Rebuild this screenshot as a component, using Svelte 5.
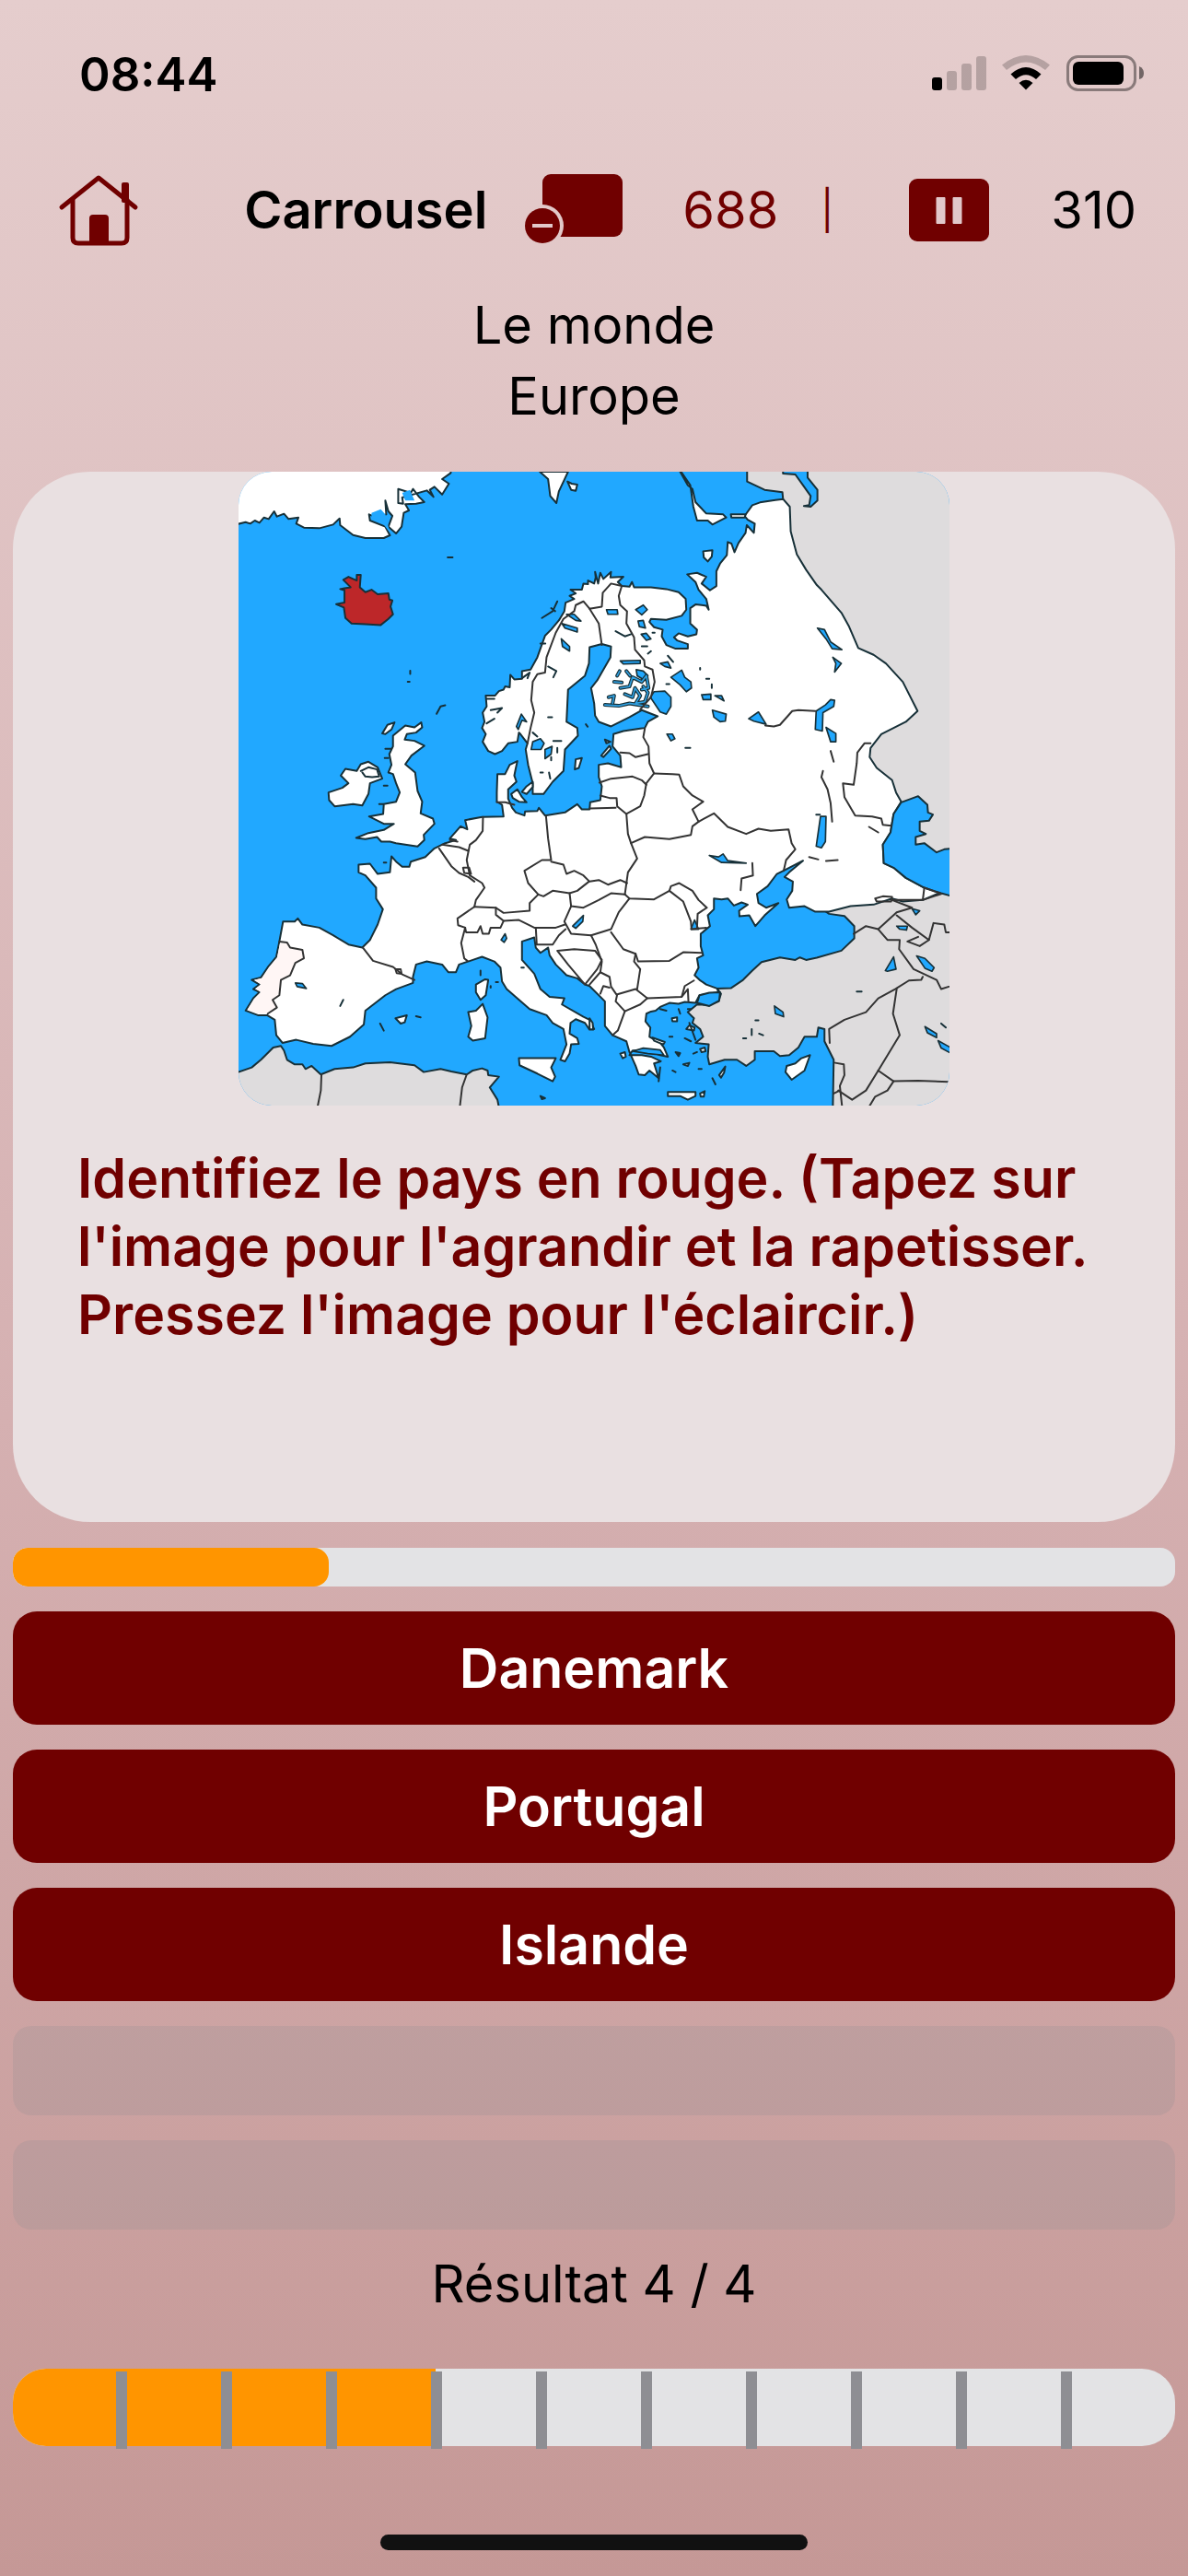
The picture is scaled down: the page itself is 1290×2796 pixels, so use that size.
<script>
	const answers = ['Danemark', 'Portugal', 'Islande'];
	const emptySlots = [0, 1];
	const ticks = Array.from({ length: 10 }, (_, i) => i);

	let timeLeft = 27.2;
	let result = 4;
	let played = 4;
	let total = 11;

	// inland borders, drawn as open lines over the land
	const borders = [
		// norway, sweden, finland
		'M968 920L978 870L990 820L980 780L985 720L1000 695L1025 690L1030 640L1060 560L1085 515L1120 490L1125 470L1150 458L1170 482L1210 475L1213 430L1240 400L1275 408',
		'M1170 482L1200 530L1210 600',
		'M1275 408L1265 440L1270 470L1292 490L1290 530L1315 575L1318 615L1348 650L1350 670L1375 680L1382 720L1370 770L1335 810',
		// baltics and belarus
		'M1350 872L1345 900L1362 930L1365 985L1380 1018L1355 1050L1348 1090L1335 1125L1290 1150',
		'M1270 950L1300 952L1320 965L1360 955', 'M1202 1048L1240 1035L1310 1028L1340 1040L1355 1055',
		'M1380 1018L1440 1020L1462 1022L1475 1060L1505 1090L1540 1110L1505 1135L1525 1175L1505 1190L1500 1218L1430 1232L1350 1225L1305 1245',
		'M1205 1090L1235 1098L1258 1098L1260 1125L1290 1150L1295 1215L1305 1245L1325 1295L1295 1340L1285 1412',
		'M1170 1132L1255 1130',
		// ukraine and moldova
		'M1525 1175L1575 1148L1620 1192L1680 1215L1720 1198L1760 1205L1818 1200L1828 1245L1840 1265L1810 1300L1802 1335',
		'M1285 1412L1300 1425L1380 1428L1430 1400L1475 1435L1500 1500L1502 1525L1550 1520',
		'M1430 1400L1435 1385L1462 1375L1505 1400L1525 1430L1552 1455L1522 1475L1520 1520',
		// benelux, germany
		'M823 1160L822 1205L800 1235L780 1250L770 1300L775 1325L780 1350L820 1375L828 1390L800 1430L795 1452',
		'M680 1262L720 1320L745 1342L775 1355L795 1370', 'M690 1250L745 1258L775 1270', 'M715 1235L740 1240',
		'M758 1325L778 1325L784 1345L762 1342Z', 'M868 1112L895 1112L925 1120',
		'M1028 1155L1035 1230L1045 1300L1015 1300L958 1335L970 1375L1003 1412L975 1440L975 1465L890 1472L865 1455L795 1452',
		// central europe
		'M1045 1305L1085 1315L1095 1345L1120 1335L1150 1350L1170 1370L1200 1365L1230 1380L1270 1365L1292 1375',
		'M1003 1412L1020 1418L1050 1400L1105 1408L1130 1400L1168 1370', 'M1105 1408L1110 1450L1150 1455L1200 1430L1240 1408L1285 1412',
		'M1110 1450L1088 1500L1110 1540L1175 1545L1240 1525L1265 1470L1300 1425',
		// alps
		'M795 1452L740 1490L742 1512L765 1520L768 1535L805 1535L815 1515L822 1540L842 1540L848 1520L880 1520L890 1498L865 1478L865 1455',
		'M890 1498L940 1495L990 1520L1060 1520L1090 1510', 'M765 1520L752 1570L762 1620L772 1628',
		'M995 1520L998 1575L1050 1575L1070 1545L1092 1525',
		// balkans
		'M1065 1595L1100 1640L1155 1705L1195 1655L1210 1625L1188 1595L1120 1590Z', 'M1175 1545L1190 1575L1210 1630L1205 1665L1170 1705',
		'M1240 1535L1280 1590L1320 1605L1328 1630L1430 1628L1475 1600L1535 1602',
		'M1205 1665L1235 1680L1240 1712L1258 1738L1320 1720L1358 1750L1335 1770L1285 1792L1255 1760L1260 1738',
		'M1320 1605L1315 1630L1335 1655L1325 1720', 'M1358 1750L1470 1745L1480 1710L1510 1692', 'M1285 1792L1262 1855L1245 1870',
		'M1205 1735L1215 1710L1235 1715', 'M1470 1745L1490 1720L1492 1760',
		// iberia
		'M160 1565L185 1568L195 1585L235 1592L240 1620L212 1635L195 1675L165 1690L160 1740L138 1755L152 1780L122 1800',
		'M432 1585L465 1628L530 1648L560 1672L600 1690', 'M538 1655L555 1655L558 1670L542 1668Z',
		// russia
		'M1742 862L1770 865L1790 860L1830 815L1850 812L1905 815',
		'M2085 920L2065 920L2042 950L2040 985L2030 1055L1995 1050L2000 1095L2035 1155L2090 1158L2120 1165L2125 1185L2152 1188',
		'M1930 1010L1925 1030L1945 1070L1955 1115L1960 1175', 'M1955 945L1965 980',
		'M1885 1290L1915 1298', 'M1940 1303L1978 1300', 'M2080 1192L2110 1210', 'M1700 1310L1702 1350L1665 1360L1662 1398',
		// caucasus and near east
		'M2100 1425L2125 1418L2155 1420L2152 1435L2105 1435Z', 'M2255 1430L2260 1390L2315 1410L2255 1430L2155 1430L2220 1455L2170 1470L2110 1525',
		'M2030 1540L2070 1515L2110 1525L2140 1560L2180 1560L2178 1590L2225 1655L2300 1690L2315 1720L2340 1712',
		'M2170 1480L2220 1520L2275 1560L2245 1580L2205 1565L2240 1550', 'M2275 1560L2290 1505L2325 1510L2330 1535L2345 1535',
		'M1952 1895L1950 1850L2000 1820L2070 1795L2110 1750L2165 1720L2210 1692L2250 1690L2255 1680',
		'M2170 1720L2158 1800L2180 1870L2110 1985L2070 2050L2025 2080L1980 2050',
		'M2110 1985L2160 2020L2240 2018L2340 2022', 'M2160 2020L2140 2050L2100 2070L2082 2100', 'M1970 1960L1998 1965L2000 2000L1985 2035L1992 2100', 'M1965 2060L1985 2050',
		// north africa
		'M297 1998L295 2050L285 2100', 'M770 1998L755 2040L748 2100'
	];

	const lakes = [
		'M1095 500L1120 500L1142 522L1125 520Z', 'M1080 530L1130 545L1130 558L1090 545Z', 'M1078 580L1105 605L1105 620L1082 605Z',
		'M980 940L985 915L1010 905L1022 920L1012 940Z', 'M1025 970L1025 940L1048 930L1045 955Z', 'M932 865L948 825L965 850L950 845L938 875Z',
		'M1225 485L1260 485L1262 500L1230 500Z', 'M1320 485L1345 470L1358 485L1340 502Z', 'M1328 522L1345 520L1352 545L1332 540Z', 'M1338 565L1355 562L1370 580L1355 585Z',
		'M1270 652L1335 650L1335 660L1280 662Z', 'M1322 680L1345 685L1360 700L1350 715L1325 700Z',
		'M1368 770L1380 752L1415 750L1435 770L1435 800L1420 825L1400 818Z',
		'M1400 660L1425 655L1435 675L1415 670Z', 'M1435 705L1470 682L1480 705L1500 720L1502 740L1485 752L1465 730Z',
		'M1535 762L1565 760L1565 778L1540 778Z', 'M1578 765L1600 765L1608 782Z', 'M1570 812L1615 825L1612 848L1595 850L1575 835Z',
		'M1688 840L1720 818L1745 858L1705 848Z', 'M1422 890L1440 890L1448 905L1435 912Z',
		'M1912 545L1935 550L1955 590L1992 615L1960 612L1940 580Z', 'M1962 640L1990 660L1968 688L1972 660Z',
		'M1938 795L1955 778L1968 780L1965 800L1930 820L1928 880L1905 875L1908 815Z', 'M1940 868L1972 888L1972 915L1955 915Z',
		'M1922 1158L1940 1158L1938 1240L1925 1260L1908 1255Z', 'M1560 1285L1590 1290L1605 1280L1620 1302L1680 1310L1600 1308Z',
		'M1500 1525L1512 1495L1525 1525Z', 'M1115 1515L1150 1480L1148 1500L1125 1522Z', 'M882 1560L895 1540L900 1555L892 1568Z',
		'M212 1700L235 1702L248 1718L218 1712Z',
		'M2220 1458L2245 1465L2232 1478Z', 'M2170 1515L2205 1515L2202 1528L2180 1525Z', 'M2235 1612L2262 1620L2292 1650L2285 1662L2262 1652Z',
		'M2133 1660L2160 1615L2168 1655L2140 1662Z', 'M1772 1775L1800 1795L1802 1810L1775 1800Z',
		'M2262 1842L2300 1865L2300 1878L2270 1862Z', 'M2305 1888L2345 1910V1928L2315 1912Z', 'M1310 1922L1345 1912L1400 1918L1412 1935L1360 1930Z'
	];

	// the finnish lake district
	const lakeland = 'M1220 795L1265 798L1300 790L1360 800M1232 770L1250 765L1245 790M1270 740L1300 735L1310 705L1340 720L1355 700L1362 740L1340 745M1285 760L1310 770L1318 740L1335 765L1320 790L1350 785L1360 755L1345 735M1250 720L1275 722M1260 700L1268 685M1290 685L1302 700';

	const islands = [
		// great britain and ireland
		'M530 895L570 862L600 868L622 852L625 868L605 885L575 890L568 908L600 912L632 928L590 960L570 988L602 1015L610 1075L625 1110L620 1148L660 1165L665 1182L630 1218L632 1235L610 1256L540 1245L520 1240L492 1240L478 1225L440 1232L410 1228L450 1212L500 1202L533 1182L500 1182L452 1158L498 1150L500 1118L540 1110L552 1080L540 1050L530 1020L515 1015L525 990L518 955L530 930Z',
		'M320 1080L365 1065L385 1050L360 1025L375 1003L412 1010L425 988L450 980L480 998L495 1035L455 1050L450 1085L430 1122L400 1118L340 1125L322 1105Z',
		'M495 888L512 860L535 852L525 875L505 890Z',
		// denmark, gotland, estonian islands
		'M915 1085L935 1070L950 1095L965 1112L940 1110L920 1098Z', 'M950 1078L965 1060L985 1045L985 1062L965 1085Z', 'M1122 1005L1125 972L1145 968L1135 1000Z', 'M1208 960L1235 928L1240 938L1215 965Z', 'M1220 908L1238 915L1225 920Z',
		// mediterranean
		'M800 1705L830 1688L840 1690L832 1740L815 1755L800 1730Z', 'M775 1795L800 1790L822 1768L838 1812L830 1880L790 1888L775 1875L785 1840Z',
		'M538 1815L575 1805L568 1828L555 1832Z', 'M940 1945L1060 1945L1045 1975L1058 2005L1050 2020L1000 1995L942 1968Z',
		'M1425 2055L1515 2055L1515 2068L1490 2080L1465 2068L1425 2068Z', 'M1530 2060L1545 2052L1542 2070L1532 2070Z',
		'M1808 1990L1812 1970L1840 1962L1860 1945L1888 1935L1870 1985L1828 2015Z', 'M1592 2000L1612 1972L1608 1992L1598 2008Z',
		'M1438 1815L1455 1812L1455 1825L1440 1825Z', 'M1485 1850L1495 1838L1512 1845L1510 1855Z', 'M1530 1915L1545 1910L1548 1922L1535 1925Z',
		'M1270 1930L1285 1925L1288 1940L1278 1945Z', 'M1375 1878L1415 1892L1410 1900L1380 1888Z', 'M1450 1925L1465 1928L1460 1938Z', 'M1475 1965L1495 1960L1490 1970Z', 'M1170 1815L1180 1830L1182 1852L1170 1850Z',
		// barents sea
		'M1465 36L1490 80L1505 92L1515 135L1550 172L1605 175L1615 185L1570 208L1555 195L1520 195L1508 150L1498 80L1468 36Z', 'M1630 175L1678 175L1675 185L1632 185Z', 'M1540 295L1570 292L1568 312L1555 328L1542 315Z',
		'M1008 36L1035 60L1042 115L1062 138L1070 100L1088 62L1100 36Z', 'M1098 68L1112 75L1130 78L1125 98L1110 95Z'
	];

	const specks = [
		'M708 315H724', 'M586 684V694', 'M578 720H584', 'M672 824L685 800L700 796', 'M1015 512L1050 490L1065 458M1045 480L1058 490', 'M1010 595H1026',
		'M950 708L975 690L968 708', 'M848 812L885 805L870 820M835 855L860 840M835 775H860', 'M1035 670L1062 685L1052 705', 'M1035 835H1048M1052 912H1078M985 885L1000 898M1065 935V950M1045 965V975M1010 1015H1018M1038 1015L1042 1035',
		'M1158 858L1164 866', 'M505 938H525M503 968H515M500 1058H512M500 1308H508M485 1118H498', 'M488 1832L500 1855M605 1808L620 1812M358 1775L368 1755', 'M815 1660V1675M865 1697H872M848 1710V1715M948 1650H956M1010 2068L1025 2075L1015 2078Z',
		'M1255 555L1285 572L1305 565M1375 560H1382M1340 604H1358M1360 628L1370 620M1425 635L1442 655M1420 727H1430M1530 675V680M1550 710H1560M1568 728V740M1482 935H1498M1908 1152H1920',
		'M2040 1728H2056M1710 1822H1720M1698 1850V1870M1722 1865L1735 1870M1670 1880H1680M2315 1832L2330 1845',
		'M1495 1830L1515 1885M1430 1875H1440M1440 1985L1450 1990M1525 1980H1535M1508 1930L1520 1925M1480 1880L1500 1890M1570 2010L1580 2030M1400 1975L1395 2020M1420 1790L1400 1785M1460 1785L1465 1800M1490 1785H1500'
	];
</script>

<div class="page">
	<header class="status">
		<time>08:44</time>
		<svg class="indicators" viewBox="0 0 232 40" aria-hidden="true">
			<rect x="1" y="24" width="11" height="14" rx="3" />
			<g opacity="0.2">
				<rect x="17" y="17" width="11" height="21" rx="3" />
				<rect x="33" y="9" width="11" height="29" rx="3" />
				<rect x="49" y="1" width="11" height="37" rx="3" />
				<path d="M77 10.500Q103 -10.500 129 10.500L124 16Q103 -1 82 16Z" />
			</g>
			<path d="M86.500 20.500Q103 5.500 119.500 20.500L114 26Q103 16.500 92 26Z" />
			<path d="M95.500 30Q103 23.500 110.500 30L103 37.500Z" />
			<rect x="148.500" y="1.500" width="73" height="36" rx="11" fill="none" stroke="#000" stroke-width="3" opacity="0.4" />
			<rect x="154" y="7" width="55" height="25" rx="6" />
			<path d="M226 12Q231 14 231 19.500T226 26Z" opacity="0.5" />
		</svg>
	</header>

	<nav class="toolbar">
		<button class="tool" aria-label="Accueil">
			<svg width="88" height="78" viewBox="0 0 88 78" fill="none" stroke="currentColor" stroke-width="5" stroke-linecap="round" stroke-linejoin="round">
				<path d="M4 36L44 4L84 36" />
				<path d="M16 28V69Q16 75 22 75H69Q75 75 75 69V28" />
				<rect x="69" y="9" width="8" height="22" rx="2" fill="currentColor" stroke="none" />
				<path d="M34 75V48Q34 44 38 44H51Q55 44 55 48V75Z" fill="currentColor" stroke="none" />
			</svg>
		</button>
		<h1>Carrousel</h1>
		<button class="tool card-tool" aria-label="Retirer la carte">
			<svg width="108" height="78" viewBox="0 0 108 78">
				<mask id="cut">
					<rect width="108" height="78" fill="#fff" />
					<circle cx="20" cy="56" r="23" fill="#000" />
				</mask>
				<rect x="20" y="0" width="87" height="68" rx="9" fill="currentColor" mask="url(#cut)" />
				<circle cx="20" cy="56" r="19" fill="currentColor" />
				<path d="M9 56H31" stroke="#e2c8ca" stroke-width="4" />
			</svg>
		</button>
		<span class="cards">688</span>
		<span class="bar">|</span>
		<button class="tool pause-tool" aria-label="Pause">
			<svg width="88" height="68" viewBox="0 0 88 68">
				<rect width="87" height="68" rx="9" fill="currentColor" />
				<path d="M30 20.500h9v28h-9zM48 20.500h9v28h-9z" fill="#e2c8ca" stroke="#e2c8ca" stroke-linejoin="round" />
			</svg>
		</button>
		<span class="points">310</span>
	</nav>

	<div class="theme">
		<div>Le monde</div>
		<div>Europe</div>
	</div>

	<main>
		<section class="question">
			<button class="picture" aria-label="Carte de l'Europe">
				<svg viewBox="27 36 2316 2064" stroke="#173038" stroke-width="6" stroke-linejoin="round" stroke-linecap="round">
					<rect x="27" y="36" width="2316" height="2064" fill="#21a8ff" stroke="none" />
					<!-- outside europe -->
					<path fill="#dedcdd" d="M1683 20L1683 68L1740 95L1798 103L1800 125L1900 600L2000 1200L1900 1440L1950 1475L2000 1482L2032 1515L2032 1555L1990 1595L1910 1618L1875 1625L1855 1617L1840 1625L1790 1617L1730 1632L1700 1660L1670 1690L1630 1717L1585 1718L1598 1735L1590 1760L1560 1772L1520 1770L1490 1795L1510 1815L1505 1830L1530 1850L1540 1875L1515 1895L1558 1900L1555 1940L1560 1965L1610 1950L1650 1950L1680 1970L1708 1950L1708 1922L1770 1922L1790 1938L1820 1935L1850 1910L1870 1875L1910 1875L1915 1845L1935 1850L1935 1890L1965 1950L1962 2120H2360V20Z" />
					<path fill="#dedcdd" d="M10 1990L27 1990L70 1975L100 1950L140 1910L165 1905L175 1920L185 1950L210 1965L235 1965L245 1980L265 1970L295 1998L340 1980L400 1975L440 1962L520 1958L600 1968L630 1990L685 1980L720 1988L770 1998L790 1985L820 1978L838 1985L840 2000L875 2005L845 2040L870 2080L878 2120H10Z" />
					<!-- greenland -->
					<path fill="#fff" d="M10 20V210L50 200L65 205L80 195L95 202L110 185L125 190L143 165L152 182L175 173L190 190L222 185L215 205L240 218L290 220L335 208L356 188L358 210L400 242L440 252L500 252L520 243L505 215L455 195L452 175L475 185L508 175L505 130L515 165L528 180L515 215L540 237L558 215L565 170L582 162L570 142L605 140L632 135L615 118L595 92L588 105L547 92L547 138L563 140L560 120L640 97L662 118L650 95L665 85L690 110L712 75L690 60L718 40L718 20Z" />
					<path fill="#21a8ff" stroke="none" d="M560 105L585 95L600 130L570 130ZM460 170L490 158L505 175L520 235L490 195L460 185ZM1040 50H1060V68H1040Z" />
					<!-- mainland -->
					<path fill="#fff" d="M968 920L945 890L940 885L935 915L905 920L885 945L862 955L840 945L822 915L832 890L820 870L828 850L822 820L835 800L832 765L862 765L875 750L890 745L895 735L910 738L912 697L925 712L950 710L950 685L978 680L1000 640L1025 570L1045 550L1070 520L1088 490L1092 462L1120 450L1105 440L1125 432L1108 420L1145 420L1150 400L1165 402L1165 390L1185 400L1190 380L1188 362L1198 400L1205 365L1215 385L1240 362L1238 380L1280 378L1262 395L1275 408L1300 410L1308 395L1315 412L1370 412L1420 418L1460 428L1483 450L1485 485L1470 505L1420 518L1370 515L1365 525L1380 542L1408 550L1405 572L1420 600L1450 612L1490 612L1490 597L1455 585L1445 575L1460 562L1490 572L1518 565L1520 550L1498 530L1498 480L1515 468L1550 472L1558 485L1550 450L1525 420L1515 395L1488 370L1520 365L1550 378L1535 400L1562 422L1583 408L1583 360L1595 335L1617 308L1620 265L1632 270L1642 298L1655 268L1678 235L1682 210L1705 235L1708 205L1685 192L1675 180L1700 145L1725 136L1775 128L1800 125L1822 150L1825 230L1845 305L1875 355L1910 405L1925 420L1990 495L2015 540L2045 610L2095 632L2135 660L2190 720L2238 815L2200 850L2120 890L2085 935L2082 965L2105 1000L2155 1040L2168 1080L2185 1110L2160 1150L2150 1210L2125 1250L2128 1310L2160 1325L2200 1358L2260 1390L2315 1405L2255 1430L2190 1435L2155 1425L2095 1445L2020 1450L1950 1468L1905 1468L1870 1450L1820 1455L1812 1428L1830 1400L1832 1370L1805 1355L1820 1340L1865 1302L1810 1330L1780 1345L1750 1385L1715 1410L1720 1440L1745 1455L1785 1440L1740 1480L1710 1515L1690 1480L1658 1483L1657 1465L1685 1445L1665 1438L1640 1448L1620 1425L1600 1428L1575 1425L1575 1460L1555 1480L1562 1515L1532 1540L1532 1580L1540 1610L1520 1620L1525 1650L1512 1675L1528 1690L1550 1705L1585 1718L1590 1730L1528 1740L1515 1765L1480 1762L1460 1768L1430 1765L1400 1778L1385 1790L1370 1793L1355 1800L1352 1825L1368 1845L1365 1875L1400 1895L1412 1910L1425 1940L1400 1935L1360 1920L1310 1920L1300 1935L1340 1935L1370 1940L1402 1955L1380 1962L1395 2010L1365 1985L1350 2000L1330 1998L1320 1970L1300 1925L1290 1890L1245 1870L1220 1840L1220 1760L1170 1710L1155 1705L1130 1685L1095 1675L1060 1640L1040 1610L1035 1585L1010 1602L995 1585L990 1552L950 1565L950 1625L990 1670L1010 1720L1040 1745L1088 1750L1080 1770L1150 1810L1170 1820L1185 1850L1170 1852L1155 1830L1125 1818L1108 1830L1105 1865L1130 1880L1135 1898L1110 1900L1105 1930L1090 1955L1075 1950L1095 1900L1085 1850L1050 1830L1030 1805L975 1785L900 1720L885 1695L880 1650L860 1630L820 1615L790 1625L745 1640L735 1665L710 1665L690 1640L640 1630L605 1640L595 1680L595 1700L540 1720L505 1740L440 1790L435 1835L390 1875L330 1905L270 1898L215 1885L170 1895L150 1870L145 1820L120 1805L90 1805L50 1790L75 1750L95 1730L75 1720L95 1705L70 1690L100 1682L125 1645L150 1615L160 1565L172 1500L210 1500L220 1490L235 1510L290 1520L335 1545L385 1575L430 1585L455 1560L480 1510L497 1460L475 1425L475 1390L440 1350L418 1340L418 1315L455 1312L480 1345L520 1340L525 1288L540 1305L560 1322L583 1322L588 1305L635 1290L665 1262L700 1245L735 1235L715 1230L750 1190L772 1200L765 1170L820 1160L890 1158L885 1120L868 1110L868 1080L870 1020L895 1020L910 990L935 978L930 1000L925 1025L932 1045L905 1070L905 1100L918 1130L930 1145L958 1155L960 1142L1000 1140L1005 1130L1025 1155L1090 1145L1130 1118L1145 1135L1170 1135L1172 1112L1205 1105L1210 1060L1200 1030L1200 990L1230 985L1273 998L1270 960L1245 930L1248 890L1280 880L1335 872L1350 870L1360 850L1392 832L1340 812L1300 835L1270 850L1240 865L1200 850L1188 830L1185 790L1175 740L1195 715L1238 640L1240 605L1210 597L1170 607L1168 660L1155 700L1100 745L1095 850L1130 870L1132 895L1090 940L1085 1010L1050 1045L1020 1085L985 1085L985 1050L970 990L962 940Z" />
					<path fill="#fff6f5" stroke="none" d="M162 1570L185 1572L195 1588L232 1595L236 1618L210 1633L192 1673L163 1688L157 1740L136 1755L148 1778L120 1798L92 1800L56 1787L78 1752L100 1730L82 1718L100 1705L78 1690L103 1685L128 1648L153 1617Z" />
					<!-- caspian sea, kara bay -->
					<path fill="#21a8ff" d="M2185 1112L2240 1092L2270 1120L2272 1145L2288 1152L2275 1172L2245 1175L2245 1205L2265 1215L2232 1225L2232 1250L2260 1245L2300 1275L2325 1265L2360 1262V1420L2315 1408L2260 1390L2200 1358L2160 1325L2128 1310L2125 1250L2150 1210L2160 1150Z" />
					<path fill="#21a8ff" d="M1800 20V42L1840 45L1865 80L1890 115L1885 145L1868 148L1890 150L1912 130L1912 95L1880 55V20Z" />
					<path fill="#21a8ff" d="M1520 1765L1528 1740L1560 1732L1595 1730L1592 1758L1560 1775Z" />
					{#each islands as d}
						<path {d} fill="#fff" />
					{/each}
					<path fill="none" d="M425 1010L450 998L478 1005L485 1028L462 1030L440 1028L430 1015" />
					{#each lakes as d}
						<path {d} fill="#21a8ff" stroke-width="5" />
					{/each}
					<path d={lakeland} fill="none" stroke-width="12" />
					<path d={lakeland} fill="none" stroke="#2f9fe0" stroke-width="5" />
					{#each borders as d}
						<path {d} fill="none" stroke="#333" />
					{/each}
					{#each specks as d}
						<path {d} fill="none" stroke-width="6" />
					{/each}
					<!-- iceland -->
					<path fill="#bd2729" d="M372 422L358 418L372 415L392 412L368 388L385 378L400 385L412 390L412 372L425 372L422 412L440 428L460 420L480 435L515 432L518 452L528 455L522 475L530 500L515 515L490 535L440 532L395 530L375 512L370 478L345 467L372 462Z" />
				</svg>
			</button>
			<p>Identifiez le pays en rouge. (Tapez sur l'image pour l'agrandir et la rapetisser. Pressez l'image pour l'éclaircir.)</p>
		</section>

		<div class="timer" role="progressbar" aria-label="Temps" aria-valuenow={timeLeft}>
			<div class="fill" style="width: {timeLeft}%"></div>
		</div>

		<div class="answers">
			{#each answers as answer}
				<button class="answer">{answer}</button>
			{/each}
			{#each emptySlots as slot (slot)}
				<div class="slot"></div>
			{/each}
		</div>

		<div class="result">Résultat {result} / {played}</div>

		<div class="score" role="progressbar" aria-label="Résultat" aria-valuenow={result} aria-valuemax={total}>
			<div class="score-fill" style="width: {(result / total) * 100}%"></div>
			{#each ticks as tick (tick)}
				<span class="tick"></span>
			{/each}
		</div>
	</main>

	<div class="home-indicator"></div>
</div>

<style>
	:global(body) {
		margin: 0;
	}

	.page {
		--red: #700000;
		box-sizing: border-box;
		min-height: 100vh;
		display: flex;
		flex-direction: column;
		background: linear-gradient(#e5cdcd, #d5b0b1 55%, #c59896);
		font-family: Inter, "Liberation Sans", sans-serif;
		font-size: 56px;
		color: #000;
	}

	button {
		font: inherit;
		border: 0;
		padding: 0;
		background: none;
		cursor: pointer;
	}

	.status {
		display: flex;
		justify-content: space-between;
		align-items: center;
		height: 160px;
		padding: 0 47px 0 86px;
	}

	.status time {
		font-size: 51px;
		font-weight: 600;
	}

	.indicators {
		width: 232px;
		height: 40px;
	}

	.toolbar {
		display: flex;
		align-items: center;
		height: 135px;
		padding: 0 56px 0 63px;
	}

	.tool {
		display: flex;
		color: var(--red);
	}

	h1 {
		margin: 0 40px 0 auto;
		font-size: 56px;
		font-weight: 600;
	}

	.cards,
	.bar {
		color: var(--red);
	}

	.cards {
		margin: 0 46px 0 64px;
	}

	.bar {
		font-size: 42px;
	}

	.pause-tool {
		margin: 0 66px 0 82px;
	}

	.theme {
		padding: 20px 0 43px;
		line-height: 77px;
		text-align: center;
	}

	main {
		display: flex;
		flex-direction: column;
		padding: 0 14px;
	}

	.question {
		box-sizing: border-box;
		min-height: 1140px;
		border-radius: 84px;
		background: #e9e0e1;
		display: flex;
		flex-direction: column;
		align-items: center;
	}

	.picture {
		width: 61.2%;
		border-radius: 36px;
		overflow: hidden;
	}

	.picture svg {
		display: block;
		width: 100%;
	}

	.question p {
		box-sizing: border-box;
		width: 100%;
		margin: 42px 0;
		padding: 0 70px;
		color: var(--red);
		font-size: 59px;
		font-weight: 600;
		line-height: 74px;
	}

	.timer {
		height: 42px;
		margin: 28px 0 27px;
		border-radius: 16px;
		background: #e3e3e5;
		overflow: hidden;
	}

	.fill {
		height: 100%;
		border-radius: 16px;
		background: #ff9500;
	}

	.answers {
		display: flex;
		flex-direction: column;
		gap: 27px;
	}

	.answer {
		height: 123px;
		border-radius: 26px;
		background: var(--red);
		color: #fff;
		font-size: 59px;
		font-weight: 600;
	}

	.slot {
		height: 97px;
		border-radius: 20px;
		background: rgba(142, 142, 147, 0.22);
	}

	.result {
		margin: 20px 0 53px;
		line-height: 78px;
		text-align: center;
	}

	.score {
		position: relative;
		display: flex;
		justify-content: space-between;
		height: 84px;
		padding: 0 112px;
		border-radius: 36px;
		background: #e3e3e5;
	}

	.score-fill {
		position: absolute;
		inset: 0 auto 0 0;
		border-radius: 36px 0 0 36px;
		background: #ff9500;
	}

	.tick {
		position: relative;
		width: 12px;
		height: 84px;
		margin-top: 3px;
		background: #8e8e93;
	}

	.home-indicator {
		width: 36%;
		height: 17px;
		margin: auto auto 28px;
		border-radius: 9px;
		background: #111;
	}
</style>
